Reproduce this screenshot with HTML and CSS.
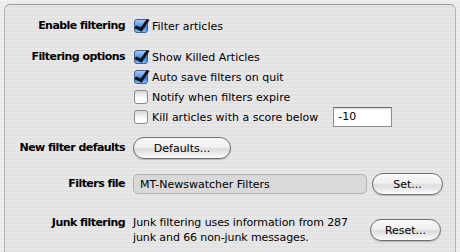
FILE: index.html
```html
<!DOCTYPE html>
<html lang="en">
<head>
    <meta charset="UTF-8">
    <title>Filtering Preferences</title>
    <link rel="stylesheet" href="styles.css">
</head>
<body>
    <div class="pane">
        <div class="row row-enable">
            <div class="label">Enable filtering</div>
            <div class="check on"><span class="box"></span>Filter articles</div>
        </div>

        <div class="row row-options">
            <div class="label">Filtering options</div>
            <div class="checks">
                <div class="check on"><span class="box"></span>Show Killed Articles</div>
                <div class="check on"><span class="box"></span>Auto save filters on quit</div>
                <div class="check"><span class="box"></span>Notify when filters expire</div>
                <div class="check score">
                    <span class="box"></span>Kill articles with a score below
                    <span class="field">-10</span>
                </div>
            </div>
        </div>

        <div class="row row-defaults">
            <div class="label">New filter defaults</div>
            <div><button class="btn btn-defaults">Defaults...</button></div>
        </div>

        <div class="row row-file">
            <div class="label">Filters file</div>
            <div class="inline">
                <div class="path">MT-Newswatcher Filters</div>
                <button class="btn btn-small">Set...</button>
            </div>
        </div>

        <div class="row row-junk">
            <div class="label">Junk filtering</div>
            <div class="inline">
                <div class="info">Junk filtering uses information from 287 junk and 66 non-junk messages.</div>
                <button class="btn btn-small">Reset...</button>
            </div>
        </div>
    </div>
</body>
</html>
```

FILE: styles.css
```css
body {
    margin: 0;
    padding: 4px;
    font-family: "DejaVu Sans", "Liberation Sans", sans-serif;
    font-size: 11px;
    color: #000;
    background: repeating-linear-gradient(to bottom, #efefef 0, #efefef 2px, #eaeaea 2px, #eaeaea 4px);
}
.pane {
    width: 450px;
    height: 242px;
    border: 1px solid #b4b4b4;
    border-top-color: #9a9a9a;
    border-bottom-color: #d0d0d0;
    border-radius: 6px;
    background: rgba(0, 0, 0, 0.03);
    padding-top: 12px;
    box-sizing: content-box;
}
.row {
    display: grid;
    grid-template-columns: 120px 1fr;
    column-gap: 8px;
    align-items: center;
}
.label {
    font-weight: bold;
    text-align: right;
    align-self: start;
    line-height: 18px;
    letter-spacing: -0.55px;
}
.row-enable { height: 18px; }
.row-options { margin-top: 12px; }
.row-options .label { line-height: 20px; }
.row-defaults { margin-top: 10px; height: 22px; }
.row-defaults .label { line-height: 22px; }
.row-file { margin-top: 14px; height: 22px; }
.row-file .label { line-height: 22px; }
.row-junk { margin-top: 20px; }
.row-junk .label { line-height: 15px; }

.check {
    display: flex;
    align-items: center;
    height: 18px;
}
.checks .check { height: 20px; }
.box {
    width: 14px;
    height: 14px;
    margin: 0 4px 0 1px;
    border: 1px solid #8a8a8a;
    border-radius: 3px;
    box-sizing: border-box;
    background: linear-gradient(to bottom, #d8d8d8, #fdfdfd 60%, #ffffff);
    position: relative;
    flex: none;
}
.check.on .box {
    border-color: #3a5f9c;
    background: linear-gradient(to bottom, #a6cdf4 0%, #5d9be6 45%, #2f76d6 55%, #7bc0f8 100%);
}
.check.on .box::after {
    content: "";
    position: absolute;
    left: 3px;
    top: -3px;
    width: 5px;
    height: 11px;
    border-right: 3px solid #111;
    border-bottom: 3px solid #111;
    transform: rotate(35deg) skewY(-8deg);
}
.field {
    margin-left: 15px;
    width: 59px;
    height: 20px;
    box-sizing: border-box;
    border: 1px solid #8e8e8e;
    border-top-color: #6f6f6f;
    background: #fff;
    padding: 0 4px;
    line-height: 18px;
    box-shadow: inset 0 1px 1px rgba(0, 0, 0, 0.15);
}
.inline {
    display: flex;
    align-items: center;
}
.path {
    width: 234px;
    height: 20px;
    box-sizing: border-box;
    padding: 0 6px;
    line-height: 19px;
    border: 1px solid #b0b0b0;
    border-radius: 5px;
    background: #d9d9d9;
}
.info {
    width: 232px;
    line-height: 15px;
    letter-spacing: -0.1px;
}
.btn {
    height: 22px;
    padding: 0;
    border: 1px solid #707070;
    border-radius: 11px;
    font-family: inherit;
    font-size: 11px;
    color: #000;
    background: linear-gradient(to bottom, #fafafa 0%, #f0f0f0 45%, #dcdcdc 55%, #f4f4f4 90%, #ffffff 100%);
    box-shadow: 0 1px 1px rgba(0, 0, 0, 0.2);
}
.btn-defaults {
    width: 98px;
}
.btn-small {
    width: 71px;
    margin-left: 5px;
}
```
